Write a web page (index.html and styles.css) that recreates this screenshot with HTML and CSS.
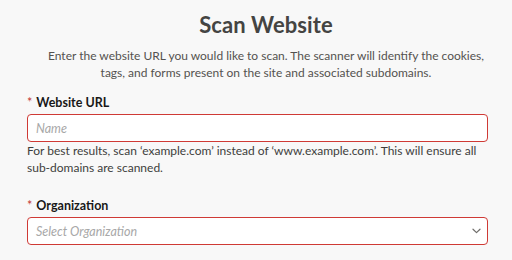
FILE: index.html
```html
<!DOCTYPE html>
<html lang="en">
<head>
<meta charset="utf-8">
<title>Scan Website</title>
<link rel="stylesheet" href="styles.css">
</head>
<body>
<main class="page">
  <header class="intro">
    <h1 class="title">Scan Website</h1>
    <p class="desc">Enter the website URL you would like to scan. The scanner will identify the cookies,<br>tags, and forms present on the site and associated subdomains.</p>
  </header>
  <div class="field field-url">
    <label class="label" for="url"><abbr class="req" title="required">*</abbr> Website URL</label>
    <input class="input" id="url" type="text" placeholder="Name">
    <p class="help">For best results, scan ‘example.com’ instead of ‘www.example.com’. This will ensure all sub-domains are scanned.</p>
  </div>
  <div class="field field-org">
    <label class="label" for="org"><abbr class="req" title="required">*</abbr> Organization</label>
    <div class="select">
      <span class="select-text">Select Organization</span>
      <svg class="chev" width="9" height="6" viewBox="0 0 9 6" aria-hidden="true"><path d="M1 1.2 L4.5 4.6 L8 1.2" fill="none" stroke="#706e6b" stroke-width="1.2" stroke-linecap="round" stroke-linejoin="round"/></svg>
    </div>
  </div>
</main>
</body>
</html>
```

FILE: styles.css
```css
html, body {
  margin: 0;
  padding: 0;
  background: #f8f8f8;
}
body {
  font-family: Lato, "Open Sans", "Liberation Sans", sans-serif;
  color: #3e3e3c;
  width: 512px;
  height: 260px;
  overflow: hidden;
}
.page {
  padding: 10px 24px 0 27px;
  display: flex;
  flex-direction: column;
}
.intro {
  display: flex;
  flex-direction: column;
  align-items: center;
  padding-left: 17px;
}
.title {
  margin: 0;
  font-size: 22px;
  line-height: 30px;
  font-weight: 700;
  color: #444442;
  letter-spacing: 0.1px;
}
.desc {
  margin: 7px 0 0;
  font-size: 12px;
  line-height: 17px;
  text-align: center;
  color: #54524f;
}
.field {
  display: flex;
  flex-direction: column;
}
.field-url { margin-top: 13px; }
.field-org { margin-top: 21px; }
.label {
  font-size: 12.5px;
  line-height: 17px;
  font-weight: 700;
  color: #181818;
  margin-bottom: 3px;
}
.req {
  color: #c23934;
  text-decoration: none;
  font-weight: 400;
  margin-right: 1px;
}
.input, .select {
  box-sizing: border-box;
  height: 28px;
  width: 461px;
  border: 1px solid #cf3a35;
  border-radius: 4px;
  background: #fff;
  font-family: inherit;
  font-size: 12.5px;
  padding: 0 8px;
  margin: 0;
  outline: none;
}
.input::placeholder {
  color: #a8a8a8;
  font-style: italic;
}
.select {
  display: flex;
  align-items: center;
  justify-content: space-between;
  padding-right: 6px;
}
.select-text {
  color: #a8a8a8;
  font-style: italic;
}
.help {
  margin: 0;
  font-size: 12px;
  line-height: 17px;
  color: #3e3e3c;
}
```
